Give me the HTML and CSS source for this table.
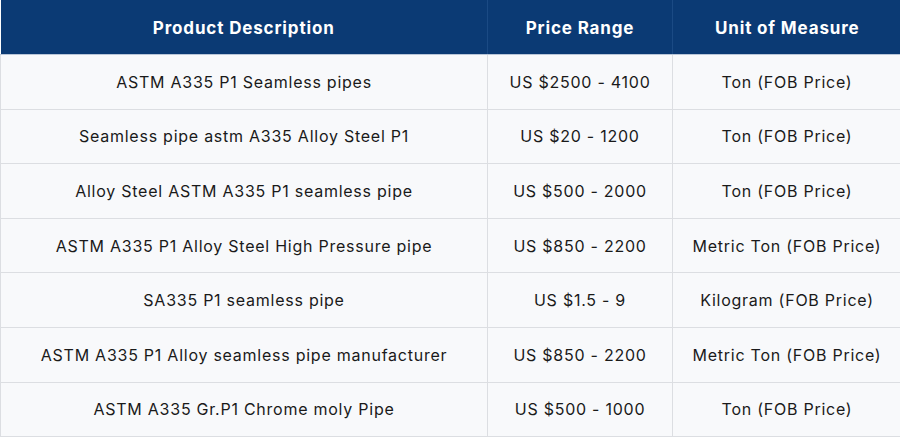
FILE: index.html
```html
<!DOCTYPE html>
<html lang="en">
<head>
<meta charset="utf-8">
<title>ASTM A335 P1 Prices</title>
<link rel="stylesheet" href="styles.css">
</head>
<body>
<table class="price-table">
  <colgroup>
    <col class="col-desc">
    <col class="col-price">
    <col class="col-unit">
  </colgroup>
  <thead>
    <tr>
      <th>Product Description</th>
      <th>Price Range</th>
      <th>Unit of Measure</th>
    </tr>
  </thead>
  <tbody>
    <tr><td>ASTM A335 P1 Seamless pipes</td><td>US $2500 - 4100</td><td>Ton (FOB Price)</td></tr>
    <tr><td>Seamless pipe astm A335 Alloy Steel P1</td><td>US $20 - 1200</td><td>Ton (FOB Price)</td></tr>
    <tr><td>Alloy Steel ASTM A335 P1 seamless pipe</td><td>US $500 - 2000</td><td>Ton (FOB Price)</td></tr>
    <tr><td>ASTM A335 P1 Alloy Steel High Pressure pipe</td><td>US $850 - 2200</td><td>Metric Ton (FOB Price)</td></tr>
    <tr><td>SA335 P1 seamless pipe</td><td>US $1.5 - 9</td><td>Kilogram (FOB Price)</td></tr>
    <tr><td>ASTM A335 P1 Alloy seamless pipe manufacturer</td><td>US $850 - 2200</td><td>Metric Ton (FOB Price)</td></tr>
    <tr><td>ASTM A335 Gr.P1 Chrome moly Pipe</td><td>US $500 - 1000</td><td>Ton (FOB Price)</td></tr>
  </tbody>
</table>
</body>
</html>
```
FILE: styles.css
```css
html, body {
  margin: 0;
  padding: 0;
  background: #ffffff;
}

.price-table {
  width: 901px;
  border-collapse: collapse;
  table-layout: fixed;
  font-family: "Inter", "Open Sans", "Liberation Sans", sans-serif;
  font-size: 16px;
  letter-spacing: 0.75px;
  color: #1a1a1a;
}

.col-desc { width: 487px; }
.col-price { width: 185px; }
.col-unit { width: 229px; }

.price-table th {
  background: #0b3a74;
  color: #ffffff;
  font-weight: 700;
  font-size: 17px;
  letter-spacing: 0.85px;
  height: 52px;
  padding: 2px 0 0;
  text-align: center;
  border-left: 1px solid #1b4a84;
  border-bottom: 1px solid #b9c6d8;
}

.price-table th:first-child {
  border-left: none;
}

.price-table td {
  background: #f8f9fb;
  height: 53.6px;
  padding: 0;
  text-align: center;
  border: 1px solid #dcdee2;
}
```
